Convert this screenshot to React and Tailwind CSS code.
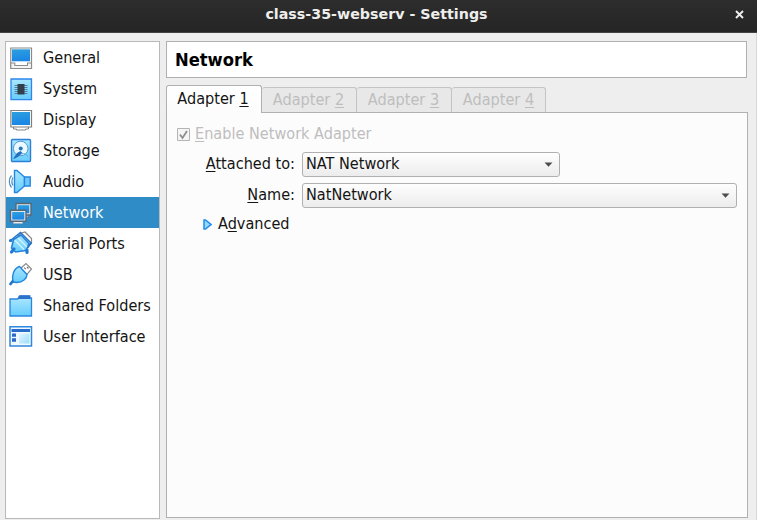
const ICONS = {
  General: (
    <>
      <path d="M3.800 6h20.700v20.500H3.800z" fill="#fff" stroke="#8a8a8a" strokeWidth="1.200" />
      <path d="M5 7.300h18v12H5z" fill="url(#screen)" />
      <path d="M3.800 21h4v2.500h12.700V21h4v5.500H3.800z" fill="#f4f4f4" stroke="#8c8c8c" strokeWidth="1.100" />
    </>
  ),
  System: (
    <>
      <path d="M4 6h20.500v20.700H4z" fill="url(#pale)" stroke="#2f86ea" strokeWidth="1.300" />
      <path d="M7.500 12.500h13M7.500 14.500h13M7.500 16.500h13M7.500 18.500h13M7.500 20.500h13" stroke="#4c83a5" strokeWidth="1" />
      <path d="M10.500 11h7v10.500h-7z" fill="#333f4b" />
    </>
  ),
  Display: (
    <>
      <path d="M6.500 22.500h15v2.500h-3v1h-9v-1h-3z" fill="#fff" stroke="#858585" />
      <path d="M3.900 6.500h20.600v16.500H3.900z" fill="#fff" stroke="#7f7f7f" strokeWidth="1.200" />
      <path d="M5 8h18v13H5z" fill="url(#screen)" />
    </>
  ),
  Storage: (
    <>
      <rect x="4.500" y="4.500" width="19" height="22" rx="1" fill="url(#pale)" stroke="#2d7fd6" strokeWidth="1.400" />
      <circle cx="13.700" cy="13.500" r="7.300" fill="#eaf8ff" stroke="#5297cf" />
      <path d="M6 24 10 18l3.500-2 2 2-4 3.500-3.500 2z" fill="#2570bd" />
      <path d="M14 19c3-1 6 0 7 3" fill="none" stroke="#54b1eb" />
      <circle cx="13.700" cy="13.500" r="2" fill="#2774c0" />
    </>
  ),
  Audio: (
    <>
      <path d="M7.500 4.500h2.500l7.500 6.500v9l-7.500 6.500H7.500z" fill="url(#pale)" stroke="#2587e2" strokeWidth="1.400" />
      <path d="M17.500 11h5.700v9h-5.700z" fill="#71c7fa" stroke="#2587e2" strokeWidth="1.400" />
      <path d="M6 11.500Q3.800 15.500 6 19.500M4.500 9.500C1.600 13 1.600 18 4.500 21.500" fill="none" stroke="#4a8ec8" strokeWidth="1.200" />
    </>
  ),
  Network: (
    <>
      <path d="M11.500 18h10v2h-10z" fill="#dfe6ea" stroke="#67798a" />
      <path d="M9 6.500h15v11.500H9z" fill="#e3eaee" stroke="#566775" strokeWidth="1.400" />
      <path d="M10.700 8.200h11.600v8.100H10.700z" fill="url(#screen)" />
      <path d="M6.500 24h9v2.300h-9z" fill="#f7f7f7" stroke="#a9b9c3" strokeWidth="0.800" />
      <path d="M3.500 13.300h15.500v11H3.500z" fill="#e3eaee" stroke="#566775" strokeWidth="1.400" />
      <path d="M5.200 15h12.100v7.600H5.200z" fill="url(#screen)" />
    </>
  ),
  "Serial Ports": (
    <>
      <path d="m14.500 5 3.500-1 6.500 6.500v5L21 18 11 8z" fill="#fff" stroke="#888" strokeWidth="1.200" />
      <path d="M14 7 22 15.500 19 22.500 8.500 24 4.500 20 6.500 11.500z" fill="url(#pale)" stroke="#2683dc" strokeWidth="1.600" />
      <path d="m3.500 12.500 10-8L24 15l-3.500 5" fill="none" stroke="#2374ca" strokeWidth="1.600" />
      <path d="m8 12.500 9 9M11 10l9 9" stroke="#d9f5ff" strokeWidth="1.100" />
      <path d="m7 21-2.500 3M3.500 12.500h.5M20 22v2.500" fill="none" stroke="#237ad3" strokeWidth="3.200" strokeLinecap="round" />
    </>
  ),
  USB: (
    <>
      <path d="m13.500 9.500 5.500-5 5.500 5.500-4.500 5.500z" fill="#fff" stroke="#8c8c8c" strokeWidth="1.200" />
      <path d="m17.300 8.700 1.500 1.500M20 8l1.500 1.500" stroke="#777" strokeWidth="1.200" />
      <path d="m12.500 7.500 7.500 8c0 4-4.500 8-10 8l-4-.500c-1.500-6 .500-13.500 6.500-15.500z" fill="url(#pale)" stroke="#2585dc" strokeWidth="1.400" />
      <path d="m5.500 22.500-2 2.500" stroke="#2374ca" strokeWidth="2.800" strokeLinecap="round" />
    </>
  ),
  "Shared Folders": (
    <>
      <path d="M10 9.500 12 5.500h10l1.500 4z" fill="#2c79d0" />
      <path d="M3 9h7.500l2-1h12v18H3z" fill="url(#pale)" stroke="#2a86df" strokeWidth="1.300" />
      <path d="M12.500 5.300h11v3.700H10.500z" fill="#2c72cc" />
    </>
  ),
  "User Interface": (
    <>
      <path d="M3 5.700h21.500V25H3z" fill="#eefaff" stroke="#3187dd" strokeWidth="1.500" />
      <path d="M4.500 8h18.500v3H4.500zM5 12.500h4v3.200H5zM5 17.200h4v3.500H5z" fill="#286bc8" />
      <path d="M12 12.500h10.500v10H12z" fill="url(#panel)" />
    </>
  ),
};

const TABS = [
  { n: 1, className: "h-[28px] w-[96px] border-[#b0b0b0] bg-linear-to-b from-white to-[#fcfcfc] pr-[2px] pb-px" },
  { n: 2, className: "mb-px h-[25px] w-[95px] border-l-0 border-[#c4c4c4] bg-[#e8e8e8] pr-px text-[#bebebe]" },
  { n: 3, className: "mb-px h-[25px] w-[95px] border-l-0 border-[#c4c4c4] bg-[#e8e8e8] pr-px text-[#bebebe]" },
  { n: 4, className: "mb-px h-[25px] w-[94px] border-l-0 border-[#c4c4c4] bg-[#e8e8e8] text-[#bebebe]" },
];

function Key({ children }) {
  return <span className="underline decoration-1 underline-offset-2">{children}</span>;
}

function Gradients() {
  return (
    <svg className="absolute h-0 w-0">
      <defs>
        <linearGradient id="screen" x1="0" y1="0" x2="0.2" y2="1">
          <stop offset="0" stopColor="#2da0de" />
          <stop offset="1" stopColor="#1b86e6" />
        </linearGradient>
        <linearGradient id="pale" x1="0" y1="0" x2="0" y2="1">
          <stop offset="0" stopColor="#a8e6ff" />
          <stop offset="1" stopColor="#66cdfc" />
        </linearGradient>
        <linearGradient id="panel" x1="0" y1="0" x2="1" y2="1">
          <stop offset="0" stopColor="#e2f5ff" />
          <stop offset="1" stopColor="#9bddfb" />
        </linearGradient>
      </defs>
    </svg>
  );
}

function Combo({ value, className }) {
  return (
    <div className={`flex h-[25px] items-center justify-between rounded-[3px] border border-[#b0b0b0] bg-linear-to-b from-[#fefefe] to-[#ececec] pr-[6px] pb-px pl-[3px] ${className}`}>
      <span>{value}</span>
      <svg width="9" height="5" viewBox="0 0 9 5">
        <path d="M.5.500h8L4.500 4.700z" fill="#4d4d4d" />
      </svg>
    </div>
  );
}

export default function App() {
  return (
    <div className="flex h-[520px] w-[757px] flex-col overflow-hidden bg-[#eeeeee] font-['DejaVu_Sans_Condensed','DejaVu_Sans',sans-serif] text-[16.120px] leading-[20px] whitespace-nowrap text-[#141414] [font-stretch:condensed]">
      <Gradients />
      <header className="flex h-[33px] shrink-0 items-center border-b border-[#444] bg-linear-to-b from-[#2d2d2d] to-[#252525] pb-[4px] font-['DejaVu_Sans',sans-serif] text-[14.250px] font-bold text-[#eeeeec] [font-stretch:normal]">
        <span className="w-[32px]" />
        <span className="flex-1 text-center">class-35-webserv - Settings</span>
        <span className="flex w-[36px] justify-center">
          <svg width="9" height="9" viewBox="0 0 9 9">
            <path d="m1 1 7 7m0-7-7 7" stroke="#eee" strokeWidth="1.900" />
          </svg>
        </span>
      </header>
      <main className="flex flex-1 border-r border-[#d8d8d8] pt-2 pl-[5px]">
        <nav className="h-[478px] w-[155px] border border-[#b9b9b9] bg-white">
          {Object.entries(ICONS).map(([name, icon]) => (
            <div key={name} className={`flex h-[31px] items-center pl-px ${name === "Network" ? "bg-[#308cc6] text-white" : ""}`}>
              <svg width="28" height="31" viewBox="0 0 28 31" className="shrink-0">{icon}</svg>
              <span className="pl-2">{name}</span>
            </div>
          ))}
        </nav>
        <section className="ml-[6px] flex w-[582px] flex-col">
          <h1 className="flex h-[37px] w-[581px] items-center border border-[#b0b0b0] bg-white pl-2 text-[18.200px] font-bold text-black">Network</h1>
          <div className="z-10 mt-[7px] flex h-[28px] items-end">
            {TABS.map(({ n, className }) => (
              <div key={n} className={`flex items-center justify-center rounded-t-[3px] border border-b-0 ${className}`}>
                <span>Adapter <Key>{n}</Key></span>
              </div>
            ))}
          </div>
          <div className="-mt-px h-[406px] border border-[#b0b0b0] bg-[#fcfcfc]">
            <div className="mt-[11px] flex h-5 items-center pl-[10px] text-[#bebebe]">
              <svg width="13" height="13" viewBox="0 0 13 13">
                <path d="M.5.500h12v12H.5z" fill="#f4f4f4" stroke="#b4b4b4" />
                <path d="m3 6.500 2.500 3.500L10 3" fill="none" stroke="#8e8e8e" strokeWidth="1.800" />
              </svg>
              <span className="pl-[5px]"><Key>E</Key>nable Network Adapter</span>
            </div>
            <div className="mt-2 grid grid-cols-[128px_1fr] items-center gap-x-[7px] gap-y-[6px]">
              <span className="pb-px text-right"><Key>A</Key>ttached to:</span>
              <Combo value="NAT Network" className="w-[258px]" />
              <span className="pb-px text-right"><Key>N</Key>ame:</span>
              <Combo value="NatNetwork" className="w-[435px]" />
            </div>
            <div className="mt-[6px] flex h-5 items-center pl-[36px]">
              <svg width="9" height="11" viewBox="0 0 9 11">
                <path d="M1 1h1.500L8 5.500 2.500 10H1z" fill="#91d9ff" stroke="#238be8" strokeWidth="1.500" />
              </svg>
              <span className="pl-[6px]">A<Key>d</Key>vanced</span>
            </div>
          </div>
        </section>
      </main>
    </div>
  );
}
